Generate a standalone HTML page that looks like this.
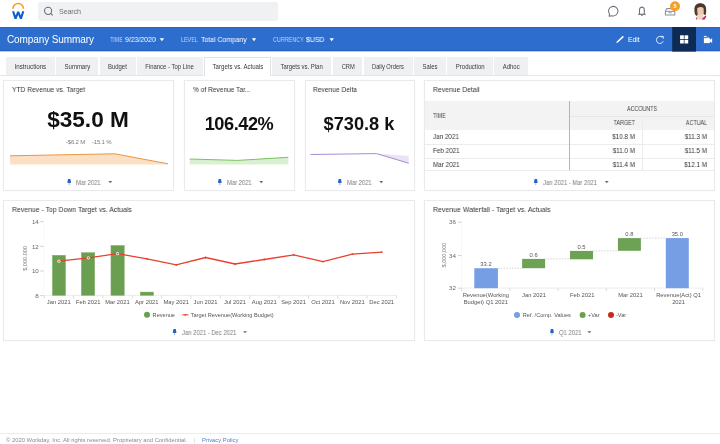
<!DOCTYPE html>
<html><head><meta charset="utf-8">
<style>
*{box-sizing:border-box;margin:0;padding:0}
html,body{width:720px;height:444px;overflow:hidden;background:#fff;font-family:"Liberation Sans",sans-serif;color:#333}
.a{position:absolute}
svg{position:absolute;overflow:visible}
.t{position:absolute;white-space:nowrap;line-height:normal}
.pd,.t,.ct,.tc,.th,.tab,.ft,.big,svg{will-change:transform}
.r{text-align:right}
#search{position:absolute;left:38.3px;top:1.7px;width:240px;height:19.5px;background:#eff1f2;border-radius:2.5px}
#bar{position:absolute;left:0;top:27px;width:720px;height:24px;background:#2c6dce;border-bottom:1px solid #2762c2;border-top:1px solid #2a66c4}
.fl{font-size:6.6px;color:#c6d6f2;transform:scaleX(0.82);transform-origin:0 0}
.fv{font-size:7.2px;color:#fff;transform:scaleX(0.955);transform-origin:0 0}
.car{position:absolute;width:0;height:0;border-left:2.2px solid transparent;border-right:2.2px solid transparent;border-top:3px solid #fff}
.tab{position:absolute;top:57px;height:18px;background:#eff0f1;font-size:7.2px;color:#3a3a3a;text-align:center;padding-top:5.4px;white-space:nowrap}
.tab span{display:inline-block;transform-origin:50% 0}
.tab.act{background:#fff;border:1px solid #e2e2e2;border-bottom:none;height:19px;padding-top:4.4px}
#main{position:absolute;left:0;top:76px;width:720px;height:357px;background:#fff}
.card{position:absolute;background:#fff;border:1px solid #e9eaec;box-shadow:0 0 1px rgba(0,0,0,.05)}
.ct{position:absolute;white-space:nowrap;font-size:7.7px;color:#333;transform-origin:0 0}
.big{position:absolute;text-align:center;font-weight:bold;color:#111;white-space:nowrap}
.pd{position:absolute;white-space:nowrap;font-size:6.3px;color:#7a7a7a;transform:scaleX(0.93);transform-origin:0 0}
.pc{position:absolute;width:0;height:0;border-left:1.9px solid transparent;border-right:1.9px solid transparent;border-top:2.1px solid #6a6a6a}
.th{position:absolute;white-space:nowrap;font-size:6.6px;color:#444;transform:scaleX(0.815);transform-origin:0 0}
.th.r{transform-origin:100% 0}
.tc{position:absolute;white-space:nowrap;font-size:7px;color:#333;transform:scaleX(0.9);transform-origin:0 0}
.tc.r{transform-origin:100% 0}
.ft{position:absolute;top:437.3px;white-space:nowrap;font-size:5.85px;color:#8a8a8a}
</style></head><body>
<!-- header -->
<svg style="left:0;top:0" width="40" height="27" viewBox="0 0 40 27">
  <path d="M12.9 8.8 A5.3 5.3 0 0 1 23.5 8.8" fill="none" stroke="#f4a01a" stroke-width="1.6"/>
  <path d="M13.1 11.2 L15.5 18.6 L18.2 11.8 L20.9 18.6 L23.3 11.2" fill="none" stroke="#0b5fd0" stroke-width="2.1" stroke-linejoin="miter" stroke-miterlimit="2"/>
</svg>
<div id="search"></div>
<svg style="left:0;top:0" width="300" height="27" viewBox="0 0 300 27"><circle cx="48.1" cy="10.8" r="3.6" fill="none" stroke="#676d75" stroke-width="1.05"/><path d="M50.7 13.4 L52.6 15.3" stroke="#676d75" stroke-width="1.1"/></svg>
<div class="t" style="left:58.7px;top:7.2px;font-size:7.2px;letter-spacing:-0.15px;color:#6e7177">Search</div>
<svg style="left:0;top:0" width="720" height="27" viewBox="0 0 720 27">
  <path d="M609.6 14.2 A4.75 4.75 0 1 1 611.9 15.7 L609.1 16.2 Z" fill="none" stroke="#6c737c" stroke-width="1.05" stroke-linejoin="round"/>
  <path d="M639.5 14.1 L639.5 9.9 C639.5 8.3 640.5 7.3 641.9 7.3 C643.3 7.3 644.3 8.3 644.3 9.9 L644.3 14.1" fill="none" stroke="#6c737c" stroke-width="1.1"/>
  <path d="M638.2 14.3 L645.6 14.3" stroke="#6c737c" stroke-width="1.2"/>
  <path d="M641.1 15.4 L642.7 15.4" stroke="#6c737c" stroke-width="1"/>
  <path d="M641.4 6.8 L642.4 6.8" stroke="#6c737c" stroke-width="0.9"/>
  <path d="M666.6 8.6 L673.6 8.6 L674.8 11.4 L674.8 15 L665.4 15 L665.4 11.4 Z" fill="none" stroke="#8c939c" stroke-width="1.1" stroke-linejoin="round"/>
  <path d="M665.4 11.4 L674.8 11.4" stroke="#8c939c" stroke-width="1"/>
  <rect x="668.4" y="12.4" width="3.4" height="0.9" fill="#8c939c"/>
  <circle cx="675" cy="6.3" r="5" fill="#f5a02a"/>
  <text x="675" y="8.2" font-size="5.5" font-weight="bold" fill="#fff" text-anchor="middle" font-family="Liberation Sans">5</text>
  <path d="M700.2 3.3 C696.6 3.3 694.3 5.8 694.4 9.4 C694.5 12.2 694.6 14.6 696.4 16 L697.6 15 L697.4 7.4 L703.2 7.4 L703.6 14.6 L705.6 15 C706.4 12.6 706.2 10.6 706.1 8.6 C705.9 5.4 704 3.3 700.2 3.3 Z" fill="#4e3526"/>
  <ellipse cx="700.4" cy="10.5" rx="3.1" ry="4.4" fill="#ebc9b2"/>
  <path d="M697.4 14 L703 14 L704.4 19.4 L696.2 19.4 Z" fill="#efd5c4"/>
  <path d="M701.6 19.4 L705.4 15.4 L706.4 16.2 L704.6 19.4 Z" fill="#b3285d"/>
  <path d="M695.8 17.6 L696.9 17.2 L697.3 19.4 L696 19.4 Z" fill="#c45a84"/>
  <path d="M697.2 7 C698.6 5.3 702.6 5.3 703.8 7.2 L703.6 8 C702 6.8 699.2 6.7 697.4 8.2 Z" fill="#4e3526"/>
  <path d="M697.4 9 C697 11 697.2 13 697.8 14.8 L696.8 15.2 C696.2 13 696.2 10.8 696.8 9 Z" fill="#6a4a36"/>
</svg>

<div id="bar"></div><div class="a" style="left:0;top:51px;width:720px;height:1px;background:#b3cbee"></div>
<div class="t" style="left:6.7px;top:33.8px;font-size:10px;letter-spacing:-0.1px;color:#fff">Company Summary</div>
<div class="t fl" style="left:110px;top:35.6px">TIME</div>
<div class="t fv" style="left:125.3px;top:35.4px">9/23/2020</div>

<div class="t fl" style="left:180.9px;top:35.6px">LEVEL</div>
<div class="t fv" style="left:200.5px;top:35.4px">Total Company</div>

<div class="t fl" style="left:273px;top:35.6px">CURRENCY</div>
<div class="t fv" style="left:306.3px;top:35.4px">$USD</div>

<svg style="left:0;top:0" width="720" height="52" viewBox="0 0 720 52">
  <path d="M616.3 43 L616.8 41.4 L622.8 35.8 L623.9 36.9 L617.9 42.5 Z" fill="#fff"/>
  <path d="M662.3 37.4 A3.5 3.5 0 1 0 663.2 41.2" fill="none" stroke="#fff" stroke-width="0.85"/>
  <path d="M660.9 36.4 L663.3 36.4 L663.3 38.7" fill="none" stroke="#fff" stroke-width="0.85"/>
  <rect x="672.2" y="27" width="23.8" height="24.6" fill="#0d2b55"/>
  <rect x="680.1" y="35.3" width="3.7" height="3.7" fill="#fff"/><rect x="684.5" y="35.3" width="3.7" height="3.7" fill="#fff"/>
  <rect x="680.1" y="39.8" width="3.7" height="3.7" fill="#fff"/><rect x="684.5" y="39.8" width="3.7" height="3.7" fill="#fff"/>
  <rect x="703.9" y="38.1" width="6" height="5" fill="#fff"/><path d="M709.6 40 L712.1 38.3 L712.1 43 L709.6 41.3 Z" fill="#fff"/>
  <rect x="703.9" y="35.9" width="2.8" height="1.3" fill="#fff" opacity="0.85"/><rect x="706.9" y="36.9" width="2" height="0.9" fill="#fff" opacity="0.6"/>
</svg>
<div class="t" style="left:628px;top:35.7px;font-size:6.8px;color:#fff">Edit</div>

<div id="main"></div>
<div class="a" style="left:0;top:75px;width:720px;height:1px;background:#e6e6e6"></div>
<div class="tab" style="left:6.2px;width:48.6px"><span style="transform:scaleX(0.862)">Instructions</span></div>
<div class="tab" style="left:56.4px;width:42.4px"><span style="transform:scaleX(0.834)">Summary</span></div>
<div class="tab" style="left:100.1px;width:35.5px"><span style="transform:scaleX(0.83)">Budget</span></div>
<div class="tab" style="left:137.2px;width:65.7px"><span style="transform:scaleX(0.824)">Finance - Top Line</span></div>
<div class="tab act" style="left:203.9px;width:67.0px"><span style="transform:scaleX(0.848)">Targets vs. Actuals</span></div>
<div class="tab" style="left:272.3px;width:59.3px"><span style="transform:scaleX(0.826)">Targets vs. Plan</span></div>
<div class="tab" style="left:333.1px;width:29.4px"><span style="transform:scaleX(0.8)">CRM</span></div>
<div class="tab" style="left:364px;width:48.6px"><span style="transform:scaleX(0.8)">Daily Orders</span></div>
<div class="tab" style="left:414.2px;width:31.5px"><span style="transform:scaleX(0.82)">Sales</span></div>
<div class="tab" style="left:447.3px;width:45.5px"><span style="transform:scaleX(0.838)">Production</span></div>
<div class="tab" style="left:494.3px;width:33.7px"><span style="transform:scaleX(0.83)">Adhoc</span></div>

<!-- top cards -->
<div class="card" style="left:3px;top:80px;width:171px;height:111px"></div>
<div class="card" style="left:184px;top:80px;width:111px;height:111px"></div>
<div class="card" style="left:305px;top:80px;width:110px;height:111px"></div>
<div class="card" style="left:424px;top:80px;width:291px;height:111px"></div>
<div class="ct" style="left:12px;top:84.8px;transform:scaleX(0.873)">YTD Revenue vs. Target</div>
<div class="ct" style="left:192.6px;top:84.8px;transform:scaleX(0.857)">% of Revenue Tar...</div>
<div class="ct" style="left:312.7px;top:84.8px;transform:scaleX(0.865)">Revenue Delta</div>
<div class="ct" style="left:432.5px;top:84.8px;transform:scaleX(0.888)">Revenue Detail</div>

<div class="big" style="left:38.3px;width:100px;top:106.6px;font-size:22.6px">$35.0 M</div>
<div class="big" style="left:189.25px;width:100px;top:114px;font-size:18.2px;letter-spacing:-0.45px">106.42%</div>
<div class="big" style="left:309.4px;width:100px;top:114px;font-size:18.2px">$730.8 k</div>
<div class="t" style="left:66px;top:139.2px;font-size:6px;color:#7a7a7a;letter-spacing:-0.2px">-$6.2 M</div>
<div class="t" style="left:92px;top:139.2px;font-size:6px;color:#7a7a7a;letter-spacing:-0.2px">-15.1 %</div>

<svg style="left:0;top:0" width="720" height="200" viewBox="0 0 720 200">
  <path d="M10 155.8 L115 153.8 L168 163.8 L168 164.5 L10 164.5 Z" fill="#fbe0c6"/>
  <path d="M10 155.8 L115 153.8 L168 163.8" fill="none" stroke="#e9963f" stroke-width="1"/>
  <path d="M189.7 159 L237.6 160.4 L288.3 157.3 L288.3 164.6 L189.7 164.6 Z" fill="#dbefd2"/>
  <path d="M189.7 159 L237.6 160.4 L288.3 157.3" fill="none" stroke="#7cc05f" stroke-width="1"/>
  <path d="M376.5 153.6 L408.7 163.2 L408.7 156 Z" fill="#ebe3f5"/>
  <path d="M310.5 154.5 L376.5 153.6 L408.7 163.2" fill="none" stroke="#a88ad6" stroke-width="1"/>
  <g id="pins"><path d="M67.90 179 H70.50 V180.00 L71.05 182.30 Q71.05 182.90 70.50 182.90 H67.90 Q67.35 182.90 67.35 182.30 L67.90 180.00 Z" fill="#2462cf"/><path d="M68.80 182.90 H69.60 V185.20 H68.80 Z" fill="#86a7e2"/><path d="M218.50 179 H221.10 V180.00 L221.65 182.30 Q221.65 182.90 221.10 182.90 H218.50 Q217.95 182.90 217.95 182.30 L218.50 180.00 Z" fill="#2462cf"/><path d="M219.40 182.90 H220.20 V185.20 H219.40 Z" fill="#86a7e2"/><path d="M338.50 179 H341.10 V180.00 L341.65 182.30 Q341.65 182.90 341.10 182.90 H338.50 Q337.95 182.90 337.95 182.30 L338.50 180.00 Z" fill="#2462cf"/><path d="M339.40 182.90 H340.20 V185.20 H339.40 Z" fill="#86a7e2"/><path d="M534.50 179 H537.10 V180.00 L537.65 182.30 Q537.65 182.90 537.10 182.90 H534.50 Q533.95 182.90 533.95 182.30 L534.50 180.00 Z" fill="#2462cf"/><path d="M535.40 182.90 H536.20 V185.20 H535.40 Z" fill="#86a7e2"/></g>
</svg>
<div class="pd" style="left:76.2px;top:178.75px">Mar 2021</div>
<div class="pd" style="left:227px;top:178.75px">Mar 2021</div>
<div class="pd" style="left:347px;top:178.75px">Mar 2021</div>
<div class="pd" style="left:543px;top:178.75px">Jan 2021 - Mar 2021</div>

<!-- table -->
<div class="a" style="left:425px;top:101px;width:289px;height:29px;background:#f3f3f3"></div>
<div class="a" style="left:569px;top:116px;width:145px;height:1px;background:#e6e6e6"></div>
<div class="a" style="left:642px;top:116px;width:1px;height:54px;background:#ececec"></div>
<div class="a" style="left:425px;top:144px;width:289px;height:1px;background:#ececec"></div>
<div class="a" style="left:425px;top:158px;width:289px;height:1px;background:#ececec"></div>
<div class="a" style="left:425px;top:169.5px;width:289px;height:1px;background:#ececec"></div>
<div class="a" style="left:569px;top:101px;width:1px;height:69px;background:#b4b4b4"></div>
<div class="th" style="left:432.8px;top:112.1px">TIME</div>
<div class="th" style="left:627.4px;top:104.8px">ACCOUNTS</div>
<div class="th r" style="left:584.9px;width:50px;top:119px">TARGET</div>
<div class="th r" style="left:657.2px;width:50px;top:119px">ACTUAL</div>
<div class="tc" style="left:432.8px;top:133.1px">Jan 2021</div>
<div class="tc" style="left:432.8px;top:146.8px">Feb 2021</div>
<div class="tc" style="left:432.8px;top:161.1px">Mar 2021</div>
<div class="tc r" style="left:584.9px;width:50px;top:133.1px">$10.8 M</div>
<div class="tc r" style="left:584.9px;width:50px;top:146.8px">$11.0 M</div>
<div class="tc r" style="left:584.9px;width:50px;top:161.1px">$11.4 M</div>
<div class="tc r" style="left:657.2px;width:50px;top:133.1px">$11.3 M</div>
<div class="tc r" style="left:657.2px;width:50px;top:146.8px">$11.5 M</div>
<div class="tc r" style="left:657.2px;width:50px;top:161.1px">$12.1 M</div>

<!-- bottom cards -->
<div class="card" style="left:3px;top:200.3px;width:412px;height:140.4px"></div>
<div class="card" style="left:424px;top:200.3px;width:291px;height:140.4px"></div>
<div class="ct" style="left:11.9px;top:204.9px;transform:scaleX(0.895)">Revenue - Top Down Target vs. Actuals</div>
<div class="ct" style="left:433px;top:204.9px;transform:scaleX(0.905)">Revenue Waterfall - Target vs. Actuals</div>

<svg style="left:0;top:0" width="720" height="444" viewBox="0 0 720 444" font-family="Liberation Sans">
  <g font-size="6.2" fill="#666" text-anchor="end">
    <text x="38.8" y="223.9">14</text><text x="38.8" y="248.6">12</text><text x="38.8" y="273.2">10</text><text x="38.8" y="297.8">8</text>
  </g>
  <path d="M43.8 221.7 V295.6" stroke="#f2f2f2" stroke-width="0.6"/>
  <g stroke="#bbb" stroke-width="0.7"><path d="M40.2 221.7 H43.6 M40.2 246.3 H43.6 M40.2 271 H43.6 M40.2 295.6 H43.6"/></g>
  <path d="M44.25 295.4 H396.5" stroke="#e4e4e4" stroke-width="0.7"/>
  <g stroke="#ccc" stroke-width="0.7"><path d="M44.25 295.6 V298.4 M73.6 295.6 V298.4 M102.95 295.6 V298.4 M132.3 295.6 V298.4 M161.65 295.6 V298.4 M191 295.6 V298.4 M220.35 295.6 V298.4 M249.7 295.6 V298.4 M279.05 295.6 V298.4 M308.4 295.6 V298.4 M337.75 295.6 V298.4 M367.1 295.6 V298.4 M396.45 295.6 V298.4"/></g>
  <text transform="translate(26.5 258.4) rotate(-90)" font-size="5.6" fill="#777" text-anchor="middle">$,000,000</text>
  <g fill="#6a9e51" stroke="#86b46d" stroke-width="0.5">
    <rect x="52.35" y="255.25" width="13.20" height="40.15"/>
    <rect x="81.35" y="252.65" width="13.40" height="42.75"/>
    <rect x="110.95" y="245.45" width="13.30" height="49.95"/>
    <rect x="140.25" y="292.05" width="13.30" height="3.35"/>
  </g>
  <path d="M58.9 261.2 L88.3 257.8 L117.6 253.7 L146.9 258.9 L176.3 264.9 L205.6 257.5 L235 264 L264.3 259.5 L293.7 254.8 L323 261.6 L352.4 254.1 L381.8 252.1" fill="none" stroke="#e8402f" stroke-width="1.3"/>
  <g fill="#e73b2c"><circle cx="146.9" cy="258.9" r="0.9"/><circle cx="176.3" cy="264.9" r="0.9"/><circle cx="205.6" cy="257.5" r="0.9"/><circle cx="235" cy="264" r="0.9"/><circle cx="264.3" cy="259.5" r="0.9"/><circle cx="293.7" cy="254.8" r="0.9"/><circle cx="323" cy="261.6" r="0.9"/><circle cx="352.4" cy="254.1" r="0.9"/><circle cx="381.8" cy="252.1" r="0.9"/></g>
  <g fill="#fde9e6"><circle cx="58.9" cy="261.2" r="1.6"/><circle cx="88.3" cy="257.8" r="1.6"/><circle cx="117.6" cy="253.7" r="1.6"/></g><g fill="#e73b2c"><circle cx="58.9" cy="261.2" r="0.75"/><circle cx="88.3" cy="257.8" r="0.75"/><circle cx="117.6" cy="253.7" r="0.75"/></g>
  <g font-size="5.8" fill="#555" text-anchor="middle">
    <text x="58.8" y="304">Jan 2021</text><text x="88.2" y="304">Feb 2021</text><text x="117.5" y="304">Mar 2021</text><text x="146.8" y="304">Apr 2021</text><text x="176.2" y="304">May 2021</text><text x="205.5" y="304">Jun 2021</text><text x="234.9" y="304">Jul 2021</text><text x="264.2" y="304">Aug 2021</text><text x="293.6" y="304">Sep 2021</text><text x="322.9" y="304">Oct 2021</text><text x="352.3" y="304">Nov 2021</text><text x="381.7" y="304">Dec 2021</text>
  </g>
  <circle cx="147" cy="314.8" r="3" fill="#6b9f50"/>
  <text x="152.6" y="316.9" font-size="5.6" fill="#555">Revenue</text>
  <path d="M182.3 314.8 H188.4" stroke="#e73b2c" stroke-width="1"/><circle cx="185.3" cy="314.8" r="0.9" fill="#e73b2c"/>
  <text x="190.7" y="316.9" font-size="5.6" fill="#555">Target Revenue(Working Budget)</text>
  <path d="M173.30 329 H175.90 V330.00 L176.45 332.30 Q176.45 332.90 175.90 332.90 H173.30 Q172.75 332.90 172.75 332.30 L173.30 330.00 Z" fill="#2462cf"/><path d="M174.20 332.90 H175.00 V335.20 H174.20 Z" fill="#86a7e2"/>

  <!-- waterfall -->
  <g font-size="6.2" fill="#666" text-anchor="end">
    <text x="456" y="224.4">36</text><text x="456" y="257.8">34</text><text x="456" y="290.4">32</text>
  </g>
  <path d="M461.5 222.2 V288.2" stroke="#f2f2f2" stroke-width="0.6"/>
  <g stroke="#bbb" stroke-width="0.7"><path d="M457.9 222.2 H461.5 M457.9 255.6 H461.5 M457.9 288.2 H461.5"/></g>
  <path d="M461.7 288.1 H702.7" stroke="#e4e4e4" stroke-width="0.7"/>
  <g stroke="#ccc" stroke-width="0.7"><path d="M461.7 288.2 V291 M509.9 288.2 V291 M558.1 288.2 V291 M606.3 288.2 V291 M654.5 288.2 V291 M702.7 288.2 V291"/></g>
  <text transform="translate(445.8 255.1) rotate(-90)" font-size="5.6" fill="#777" text-anchor="middle">$,000,000</text>
  <rect x="474.3" y="268.2" width="23.6" height="20" fill="#759ee5"/>
  <rect x="522.1" y="258.9" width="23" height="9.3" fill="#6da255"/>
  <rect x="570" y="250.9" width="23" height="8.4" fill="#6da255"/>
  <rect x="617.9" y="238.1" width="23" height="12.7" fill="#6da255"/>
  <rect x="665.8" y="238.1" width="23" height="50.1" fill="#759ee5"/>
  <g stroke="#bbb" stroke-width="0.6" stroke-dasharray="1.5 1.3">
    <path d="M497.9 268.2 H522.1 M545.1 258.9 H570 M593 250.9 H617.9 M640.9 238.1 H665.8"/>
  </g>
  <g font-size="5.8" fill="#555" text-anchor="middle">
    <text x="486" y="266.1">33.2</text><text x="533.6" y="257.1">0.6</text><text x="581.5" y="248.9">0.5</text><text x="629.4" y="236.3">0.8</text><text x="677.3" y="236.3">35.0</text>
  </g>
  <g font-size="5.8" fill="#555" text-anchor="middle">
    <text x="485.8" y="297.3">Revenue(Working</text><text x="485.8" y="304.3">Budget) Q1 2021</text>
    <text x="534" y="297.3">Jan 2021</text><text x="582.2" y="297.3">Feb 2021</text><text x="630.4" y="297.3">Mar 2021</text>
    <text x="678.6" y="297.3">Revenue(Act) Q1</text><text x="678.6" y="304.3">2021</text>
  </g>
  <circle cx="517" cy="315" r="3" fill="#759ee5"/>
  <text x="522.8" y="317.1" font-size="5.6" fill="#555">Ref. /Comp. Values</text>
  <circle cx="582.6" cy="315" r="3" fill="#6b9f50"/>
  <text x="588" y="317.1" font-size="5.6" fill="#555">+Var</text>
  <circle cx="611" cy="315" r="3" fill="#c8281e"/>
  <text x="616" y="317.1" font-size="5.6" fill="#555">-Var</text>
  <path d="M550.70 329 H553.30 V330.00 L553.85 332.30 Q553.85 332.90 553.30 332.90 H550.70 Q550.15 332.90 550.15 332.30 L550.70 330.00 Z" fill="#2462cf"/><path d="M551.60 332.90 H552.40 V335.20 H551.60 Z" fill="#86a7e2"/>
</svg>
<div class="pd" style="left:182.3px;top:329.2px">Jan 2021 - Dec 2021</div>
<div class="pd" style="left:559px;top:329.2px">Q1 2021</div>

<svg id="carets" style="left:0;top:0" width="720" height="444" viewBox="0 0 720 444"><path d="M108.30 181.10 H112.20 L110.25 183.20 Z" fill="#6a6a6a"/><path d="M259.30 181.10 H263.20 L261.25 183.20 Z" fill="#6a6a6a"/><path d="M379.30 181.10 H383.20 L381.25 183.20 Z" fill="#6a6a6a"/><path d="M604.80 181.10 H608.70 L606.75 183.20 Z" fill="#6a6a6a"/><path d="M243.10 331.20 H247.00 L245.05 333.30 Z" fill="#6a6a6a"/><path d="M587.40 331.20 H591.30 L589.35 333.30 Z" fill="#6a6a6a"/><path d="M159.70 38.30 H164.10 L161.90 41.30 Z" fill="#fff"/><path d="M251.80 38.30 H256.20 L254.00 41.30 Z" fill="#fff"/><path d="M329.50 38.30 H333.90 L331.70 41.30 Z" fill="#fff"/></svg>
<!-- footer -->
<div class="a" style="left:0;top:433px;width:720px;height:11px;background:#fff;border-top:1px solid #ececec"></div>
<div class="ft" style="left:6.3px">© 2020 Workday, Inc. All rights reserved. Proprietary and Confidential.</div>
<div class="ft" style="left:193.6px;color:#cfcfcf">|</div>
<div class="ft" style="left:201.5px;color:#4a80d4">Privacy Policy</div>
</body></html>
